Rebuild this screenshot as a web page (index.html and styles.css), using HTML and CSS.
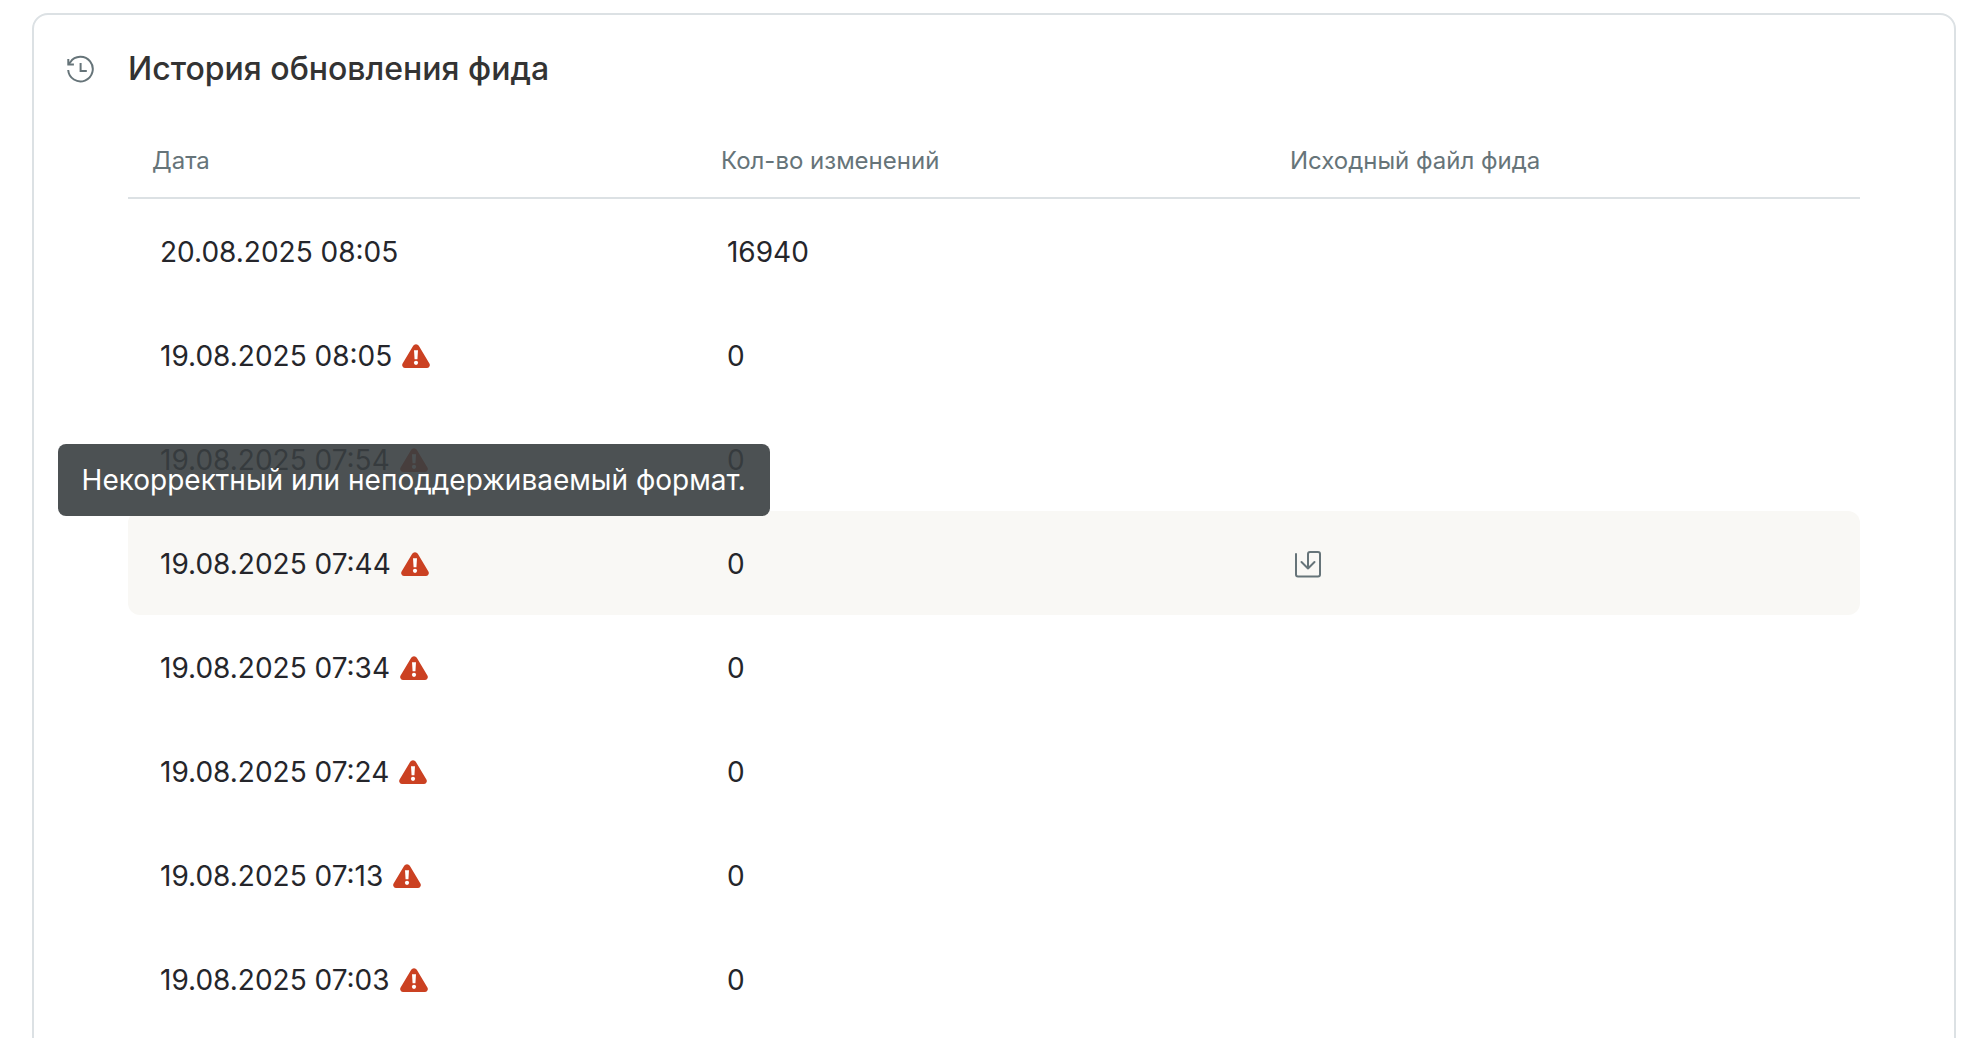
FILE: index.html
```
<!DOCTYPE html>
<html lang="ru">
<head>
    <meta charset="UTF-8">
    <meta name="viewport" content="width=device-width, initial-scale=1.0">
    <title>История обновления фида</title>
    <link rel="stylesheet" href="styles.css">
</head>
<body>
    <!-- Общие иконки -->
    <svg class="sprite" aria-hidden="true">
        <symbol id="warning" viewBox="0 0 28 24">
            <path d="M11.2 1.8a3.2 3.2 0 0 1 5.6 0l10.6 17.7a3 3 0 0 1-2.6 4.5H3.2a3 3 0 0 1-2.6-4.5z" fill="#cb4122"/>
            <path d="M12 6.2h4l-.6 9h-2.8z" fill="#fff"/>
            <circle cx="14" cy="18.8" r="2.1" fill="#fff"/>
        </symbol>
    </svg>

    <section class="card">
        <header class="card-header">
            <svg class="history-icon" viewBox="0 0 28 28" fill="none" stroke="#667479" stroke-width="2">
                <path d="M1.2 15A12.3 12.3 0 1 0 3.3 7.2L1.6 9.3"/>
                <path d="M1.3 4v5.6h5.6M13.6 8v8h6.2"/>
            </svg>
            <h1>История обновления фида</h1>
        </header>

        <table class="history">
            <thead>
                <tr>
                    <th scope="col">Дата</th>
                    <th scope="col">Кол-во изменений</th>
                    <th scope="col">Исходный файл фида</th>
                </tr>
            </thead>
            <tbody>
                <tr>
                    <td>20.08.2025 08:05</td>
                    <td>16940</td>
                    <td></td>
                </tr>
                <tr>
                    <td><span class="date">19.08.2025 08:05 <svg class="warning"><use href="#warning"/></svg></span></td>
                    <td>0</td>
                    <td></td>
                </tr>
                <tr>
                    <td><span class="date">19.08.2025 07:54 <svg class="warning"><use href="#warning"/></svg></span></td>
                    <td>0</td>
                    <td></td>
                </tr>
                <tr class="active">
                    <td>
                        <span class="date">19.08.2025 07:44 <svg class="warning"><use href="#warning"/></svg>
                            <span class="tooltip" role="tooltip">Некорректный или неподдерживаемый формат.</span>
                        </span>
                    </td>
                    <td>0</td>
                    <td>
                        <button class="download" type="button" aria-label="Скачать файл">
                            <svg viewBox="0 0 28 28" fill="none" stroke="#667479" stroke-width="2" stroke-linecap="round" stroke-linejoin="round">
                                <path d="M2 4v20.5a2 2 0 0 0 2 2h20a2 2 0 0 0 2-2V4a2 2 0 0 0-2-2h-8a2 2 0 0 0-2 2v14.5M7.5 12l6.5 6.5 6.5-6.5"/>
                            </svg>
                        </button>
                    </td>
                </tr>
                <tr>
                    <td><span class="date">19.08.2025 07:34 <svg class="warning"><use href="#warning"/></svg></span></td>
                    <td>0</td>
                    <td></td>
                </tr>
                <tr>
                    <td><span class="date">19.08.2025 07:24 <svg class="warning"><use href="#warning"/></svg></span></td>
                    <td>0</td>
                    <td></td>
                </tr>
                <tr>
                    <td><span class="date">19.08.2025 07:13 <svg class="warning"><use href="#warning"/></svg></span></td>
                    <td>0</td>
                    <td></td>
                </tr>
                <tr>
                    <td><span class="date">19.08.2025 07:03 <svg class="warning"><use href="#warning"/></svg></span></td>
                    <td>0</td>
                    <td></td>
                </tr>
            </tbody>
        </table>
    </section>
</body>
</html>
```
FILE: styles.css
```
* {
    box-sizing: border-box;
}

body {
    margin: 0;
    padding: 13px 30px 0 32px;
    height: 100vh;
    overflow: hidden;
    background: #fff;
    color: #25262b;
    font-family: Inter, "Liberation Sans", sans-serif;
    font-size: 28px;
    line-height: 40px;
}

.sprite {
    position: absolute;
    width: 0;
    height: 0;
}

.card {
    padding: 32px 94px 40px;
    border: 2px solid #dce1e4;
    border-radius: 16px;
}

.card-header {
    display: flex;
    align-items: center;
    gap: 33px;
    margin-left: -61px;
}

.history-icon {
    width: 28px;
    height: 28px;
}

h1 {
    margin: 0;
    color: #333;
    font-size: 32px;
    font-weight: 500;
    line-height: 44px;
}

.history {
    width: 100%;
    margin-top: 32px;
    border-collapse: separate;
    border-spacing: 0;
    table-layout: fixed;
}

.history th {
    height: 76px;
    padding: 2px 24px 0;
    border-bottom: 2px solid #dce1e4;
    color: #667479;
    font-size: 24px;
    font-weight: 400;
    line-height: 32px;
    text-align: left;
}

/* Первые две колонки делят остаток поровну */
.history th:last-child {
    width: 34.3%;
}

.history td {
    height: 104px;
    padding: 2px 28px 0;
}

.history td:first-child {
    padding-left: 32px;
    border-radius: 12px 0 0 12px;
}

.history td:nth-child(2) {
    padding-left: 30px;
}

.history td:last-child {
    border-radius: 0 12px 12px 0;
}

.active td {
    background: #f9f8f5;
}

.date {
    position: relative;
    display: inline-flex;
    align-items: center;
    gap: 10px;
}

.warning {
    width: 28px;
    height: 24px;
}

/* Подсказка над строкой с ошибкой */
.tooltip {
    position: absolute;
    right: -341px;
    bottom: 100%;
    margin-bottom: 28px;
    padding: 16px 24px;
    border-radius: 8px;
    background: rgba(57, 62, 64, 0.9);
    color: #fff;
    white-space: nowrap;
}

.download {
    display: flex;
    padding: 0;
    border: 0;
    background: none;
    cursor: pointer;
}

.download svg {
    width: 28px;
    height: 28px;
}
```
